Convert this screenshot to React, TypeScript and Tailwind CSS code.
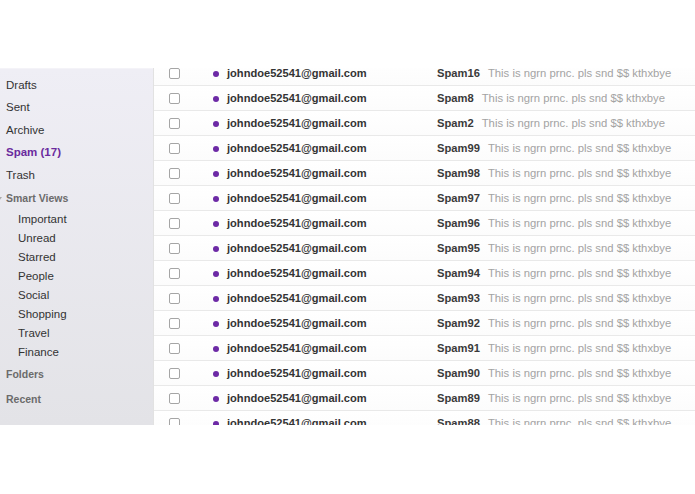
import React from "react";

const subjects = ["16", "8", "2", "99", "98", "97", "96", "95", "94", "93", "92", "91", "90", "89", "88"];

const mainItems = ["Drafts", "Sent", "Archive", "Spam (17)", "Trash"];
const smartItems = ["Important", "Unread", "Starred", "People", "Social", "Shopping", "Travel", "Finance"];

export default function App() {
  return (
    <div
      className="w-[695px] h-[494px] bg-white overflow-hidden"
      style={{ fontFamily: '"Liberation Sans", Arial, sans-serif' }}
    >
      <div className="h-[68px]" />
      <div className="flex h-[357px]">
        <aside className="w-[153px] shrink-0 bg-gradient-to-b from-[#efeef5] to-[#e3e3e7] pt-[5px] border-t border-[#f4f3f8]">
          {mainItems.map((it) => (
            <div
              key={it}
              className={
                "h-[22.5px] flex items-center pl-[6px] text-[11.5px] " +
                (it.startsWith("Spam") ? "font-bold text-[#6a2a9e]" : "text-[#333]")
              }
            >
              {it}
            </div>
          ))}
          <div className="h-[24px] flex items-center pl-[6px] text-[10.5px] font-bold text-[#6b6b6b] relative">
            <span className="absolute left-[-4px] top-[10px] w-0 h-0 border-l-[3px] border-r-[3px] border-t-[4px] border-l-transparent border-r-transparent border-t-[#aaa]" />
            Smart Views
          </div>
          {smartItems.map((it) => (
            <div key={it} className="h-[19px] flex items-center pl-[18px] text-[11.5px] text-[#333]">
              {it}
            </div>
          ))}
          <div className="h-[25px] flex items-center pl-[6px] text-[10.5px] font-bold text-[#6b6b6b]">Folders</div>
          <div className="h-[24px] flex items-center pl-[6px] text-[10.5px] font-bold text-[#6b6b6b]">Recent</div>
        </aside>
        <main className="flex-1 overflow-hidden border-l border-[#e2e2e2]">
          <div className="-mt-[7px]">
            {subjects.map((s) => (
              <div
                key={s}
                className="h-[25px] flex items-center pt-[1px] border-b border-[#e9e9e9] bg-gradient-to-b from-white to-[#fcfcfc]"
              >
                <div className="ml-[15px] w-[11px] h-[11px] border border-[#a5a5a5] rounded-[2px] bg-white shrink-0" />
                <div className="ml-[33px] w-[6px] h-[6px] rounded-full bg-[#6d2aa6] shrink-0" />
                <div className="ml-[8px] w-[210px] shrink-0 text-[11.1px] font-bold text-[#333] whitespace-nowrap">
                  johndoe52541@gmail.com
                </div>
                <div className="text-[11.2px] font-bold text-[#3a3a3a] whitespace-nowrap">Spam{s}</div>
                <div className="ml-[8px] text-[11.3px] text-[#a3a3a3] whitespace-nowrap">
                  This is ngrn prnc. pls snd $$ kthxbye
                </div>
              </div>
            ))}
          </div>
        </main>
      </div>
    </div>
  );
}
